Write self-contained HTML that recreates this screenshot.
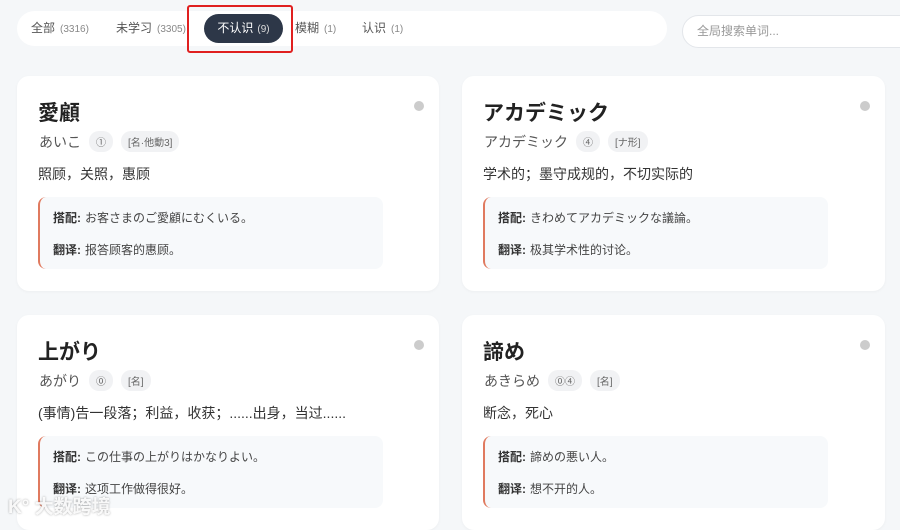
<!DOCTYPE html>
<html><head><meta charset="utf-8"><style>
*{box-sizing:border-box;margin:0;padding:0}
body{width:900px;height:522px;overflow:hidden;background:#f5f7f9;font-family:"Liberation Sans","Noto Sans CJK SC",sans-serif;position:relative;color:#333}
.tabs{position:absolute;left:17px;top:11px;width:650px;height:35px;background:#fff;border-radius:18px}
.tab{position:absolute;top:0;height:35px;line-height:35px;font-size:12px;color:#555;white-space:nowrap}
.tab small{font-size:10px;color:#888;margin-left:5px}
.active{position:absolute;left:204px;top:14px;width:79px;height:29px;border-radius:15px;background:#2d3748;color:#fff;font-size:12px;line-height:29px;text-align:center}
.active small{font-size:10px;color:#ddd;margin-left:4px}
.red{position:absolute;left:187px;top:5px;width:106px;height:48px;border:2px solid #e02020;border-radius:3px}
.search{position:absolute;left:682px;top:15px;width:240px;height:33px;background:#fff;border:1px solid #e3e6ea;border-radius:17px;font-size:12px;color:#999;line-height:31px;padding-left:14px}
.card{position:absolute;width:422px;height:215px;background:#fff;border-radius:12px;box-shadow:0 1px 3px rgba(0,0,0,.04)}
.dot{position:absolute;right:15px;top:25px;width:10px;height:10px;border-radius:50%;background:#ccc}
.t{position:absolute;left:21px;top:21px;font-size:21px;font-weight:bold;color:#222}
.r{position:absolute;left:22px;top:55px;font-size:14px;color:#555;display:flex;align-items:center}
.r span{background:#f1f2f4;border-radius:10px;font-size:10px;color:#666;padding:3px 7px;margin-left:8px}
.m{position:absolute;left:21px;top:88px;font-size:14px;color:#333}
.ex{position:absolute;left:21px;top:121px;width:345px;height:72px;background:#f7f9fb;border-left:2px solid #e07a5f;border-radius:8px;font-size:12px;color:#444}
.ex div{position:absolute;left:13px}
.ex b{color:#333;margin-right:4px}
.wm{position:absolute;left:8px;top:492px;font-size:19px;color:rgba(255,255,255,.9);text-shadow:0 0 2px rgba(0,0,0,.35);font-weight:bold}
</style></head><body>
<div class="tabs">
<div class="tab" style="left:14px">全部<small>(3316)</small></div>
<div class="tab" style="left:99px">未学习<small>(3305)</small></div>
<div class="tab" style="left:278px">模糊<small>(1)</small></div>
<div class="tab" style="left:345px">认识<small>(1)</small></div>
</div>
<div class="active">不认识<small>(9)</small></div>
<div class="red"></div>
<div class="search">全局搜索单词...</div>

<div class="card" style="left:17px;top:76px">
<div class="dot"></div><div class="t">愛顧</div>
<div class="r">あいこ<span>①</span><span>[名·他動3]</span></div>
<div class="m">照顾，关照，惠顾</div>
<div class="ex"><div style="top:12px"><b>搭配:</b>お客さまのご愛顧にむくいる。</div><div style="top:44px"><b>翻译:</b>报答顾客的惠顾。</div></div>
</div>
<div class="card" style="left:462px;top:76px;width:423px">
<div class="dot"></div><div class="t">アカデミック</div>
<div class="r">アカデミック<span>④</span><span>[ナ形]</span></div>
<div class="m">学术的；墨守成规的，不切实际的</div>
<div class="ex"><div style="top:12px"><b>搭配:</b>きわめてアカデミックな議論。</div><div style="top:44px"><b>翻译:</b>极其学术性的讨论。</div></div>
</div>
<div class="card" style="left:17px;top:315px">
<div class="dot"></div><div class="t">上がり</div>
<div class="r">あがり<span>⓪</span><span>[名]</span></div>
<div class="m">(事情)告一段落；利益，收获；......出身，当过......</div>
<div class="ex"><div style="top:12px"><b>搭配:</b>この仕事の上がりはかなりよい。</div><div style="top:44px"><b>翻译:</b>这项工作做得很好。</div></div>
</div>
<div class="card" style="left:462px;top:315px;width:423px">
<div class="dot"></div><div class="t">諦め</div>
<div class="r">あきらめ<span>⓪④</span><span>[名]</span></div>
<div class="m">断念，死心</div>
<div class="ex"><div style="top:12px"><b>搭配:</b>諦めの悪い人。</div><div style="top:44px"><b>翻译:</b>想不开的人。</div></div>
</div>
<div class="wm">K° 大数跨境</div>
</body></html>
